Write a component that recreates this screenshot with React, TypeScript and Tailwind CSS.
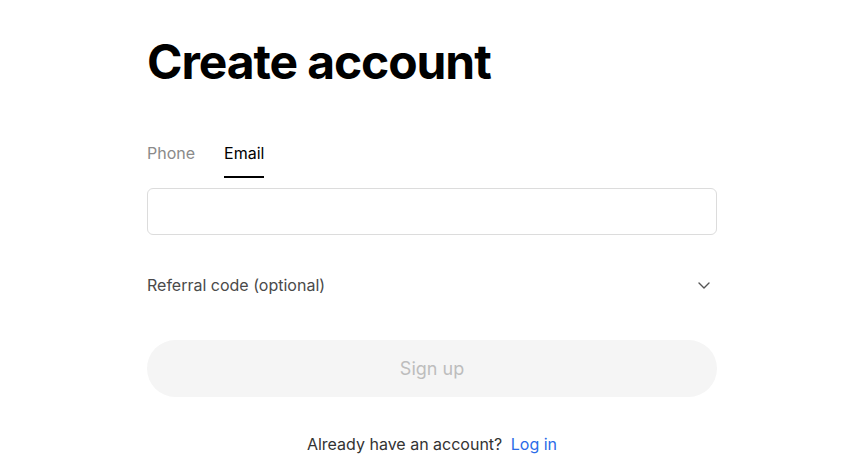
import React from "react";

export default function App() {
  return (
    <div className="w-[850px] h-[468px] bg-white overflow-hidden" style={{ fontFamily: "Inter, 'Noto Sans', sans-serif" }}>
      <div className="ml-[147px] w-[570px] pt-[30px] flex flex-col">
        <h1 className="text-[48px] leading-[64px] font-bold text-black tracking-[-1.1px]">Create account</h1>
        <div className="mt-[47px] flex gap-[29px] text-[16px] leading-[24px]">
          <div className="text-[#8a8a8a] pb-[11px]">Phone</div>
          <div className="text-black pb-[11px] border-b-2 border-black">Email</div>
        </div>
        <div className="mt-[10px] h-[47px] border border-[#dcdcdc] rounded-[6px]" />
        <div className="mt-[38px] flex items-center justify-between">
          <span className="text-[16px] leading-[24px] text-[#4a4a4a]">Referral code (optional)</span>
          <svg width="16" height="16" viewBox="0 0 16 16" fill="none" className="mr-[5px]">
            <path d="M3 6l5 5 5-5" stroke="#555" strokeWidth="1.4" strokeLinecap="round" strokeLinejoin="round" />
          </svg>
        </div>
        <button className="mt-[43px] h-[57px] rounded-full bg-[#f5f5f5] text-[#bdbdbd] text-[18px]">Sign up</button>
        <div className="mt-[35px] text-center text-[16px] leading-[24px] text-[#333]">
          Already have an account? <span className="ml-[4px] text-[#2a6be8]">Log in</span>
        </div>
      </div>
    </div>
  );
}
